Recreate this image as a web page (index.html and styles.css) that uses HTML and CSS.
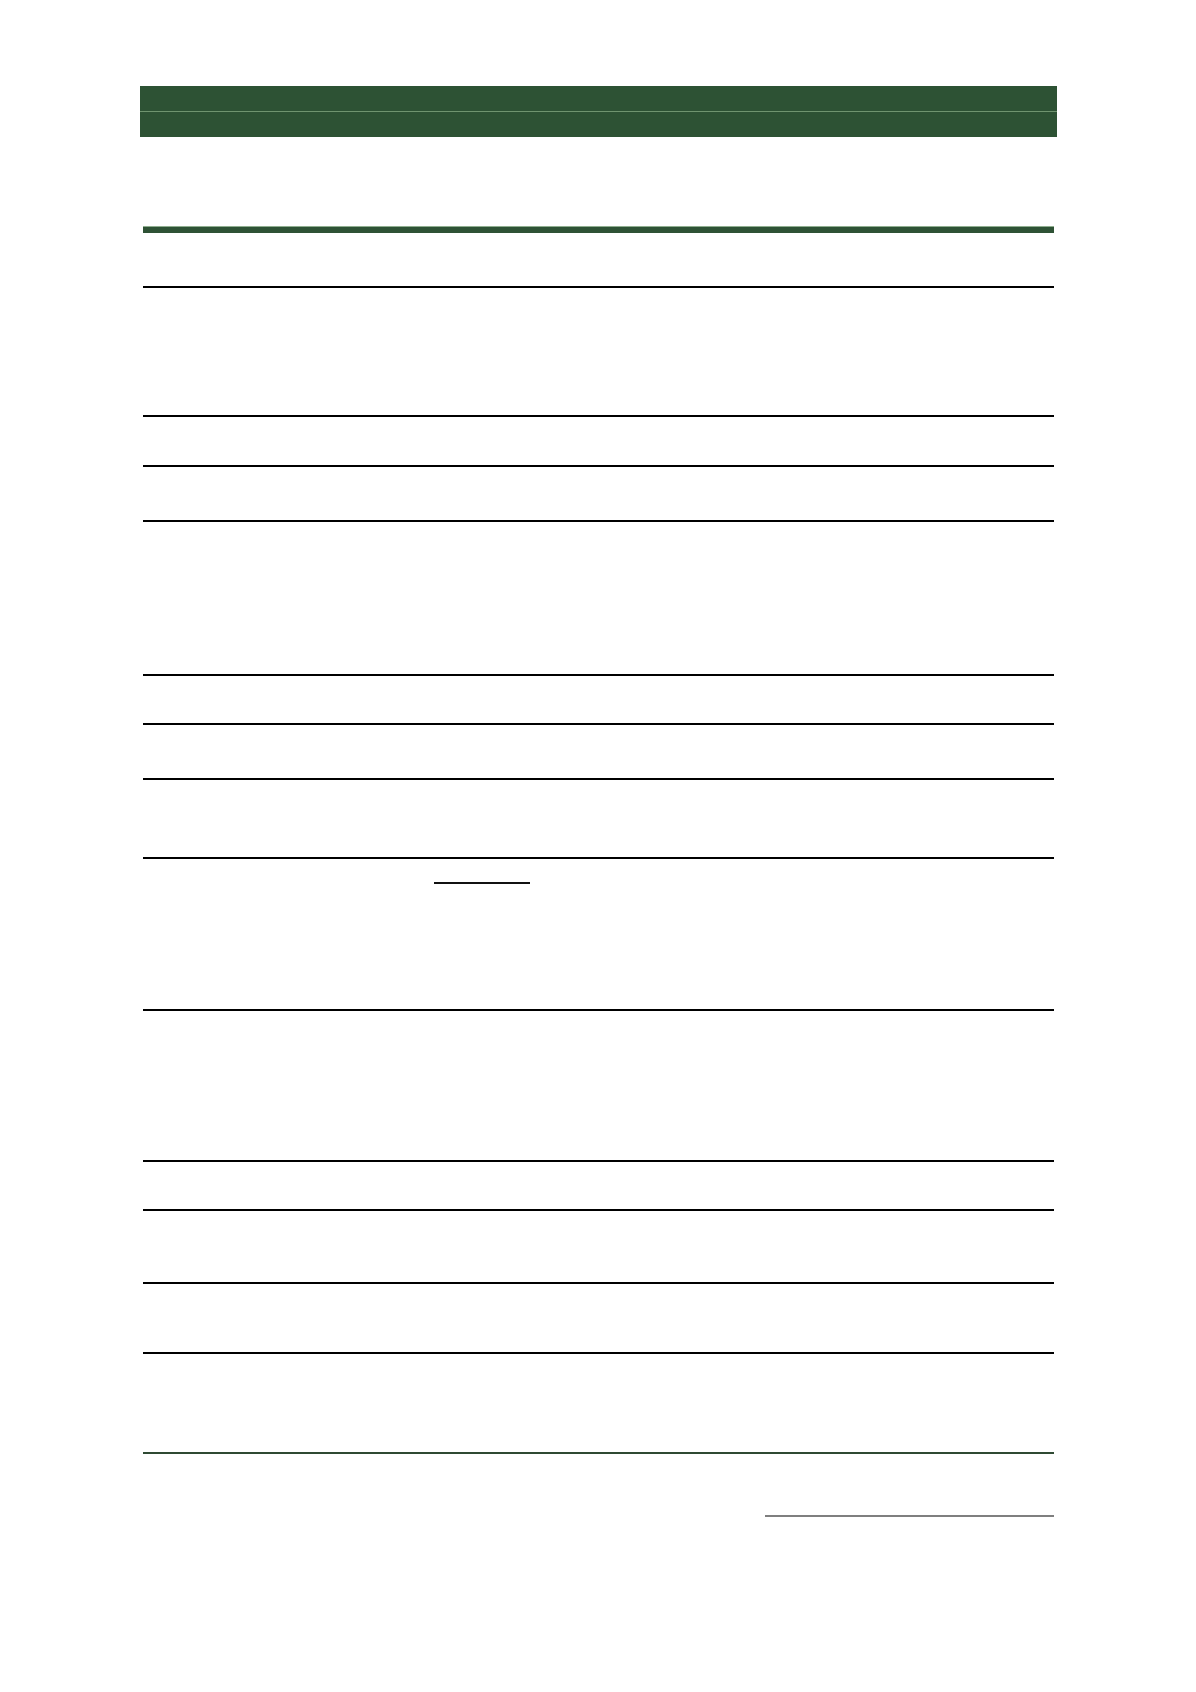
FILE: index.html
```html
<!DOCTYPE html>
<html lang="en">
<head>
<meta charset="utf-8">
<title>Document</title>
<link rel="stylesheet" href="styles.css">
</head>
<body>
<div class="page">
  <div class="banner">
    <div class="banner-half"></div>
    <div class="banner-rule"></div>
    <div class="banner-half"></div>
  </div>

  <div class="sheet">
    <div class="row r53"><div class="cell c1"></div><div class="cell c2"></div><div class="cell c3"></div></div>
    <div class="row r127"><div class="cell c1"></div><div class="cell c2"></div><div class="cell c3"></div></div>
    <div class="row r48"><div class="cell c1"></div><div class="cell c2"></div><div class="cell c3"></div></div>
    <div class="row r53"><div class="cell c1"></div><div class="cell c2"></div><div class="cell c3"></div></div>
    <div class="row r152"><div class="cell c1"></div><div class="cell c2"></div><div class="cell c3"></div></div>
    <div class="row r47"><div class="cell c1"></div><div class="cell c2"></div><div class="cell c3"></div></div>
    <div class="row r53"><div class="cell c1"></div><div class="cell c2"></div><div class="cell c3"></div></div>
    <div class="row r77"><div class="cell c1"></div><div class="cell c2"></div><div class="cell c3"></div></div>
    <div class="row r150"><div class="cell c1"><div class="blank"></div></div><div class="cell c2"></div><div class="cell c3"></div></div>
    <div class="row r149"><div class="cell c1"></div><div class="cell c2"></div><div class="cell c3"></div></div>
    <div class="row r47"><div class="cell c1"></div><div class="cell c2"></div><div class="cell c3"></div></div>
    <div class="row r71"><div class="cell c1"></div><div class="cell c2"></div><div class="cell c3"></div></div>
    <div class="row r68"><div class="cell c1"></div><div class="cell c2"></div><div class="cell c3"></div></div>
    <div class="row r98 last"><div class="cell c1"></div><div class="cell c2"></div><div class="cell c3"></div></div>
  </div>

  <div class="footer">
    <div class="sign-line"></div>
  </div>
</div>
</body>
</html>
```

FILE: styles.css
```css
html, body {
  margin: 0;
  padding: 0;
  background: #ffffff;
  font-family: "Liberation Sans", Arial, sans-serif;
}

.page {
  width: 1196px;
  padding-top: 86px;
  box-sizing: border-box;
}

.banner {
  margin-left: 140px;
  width: 917px;
  display: flex;
  flex-direction: column;
}

.banner-half {
  height: 25px;
  background: #2d5234;
}

.banner-rule {
  height: 1px;
  background: #6f946f;
}

.sheet {
  margin-top: 90px;
  margin-left: 143px;
  width: 911px;
  border-top: 6px solid #2e5235;
  box-shadow: 0 -1px 0 #8fae8f;
}

.row {
  display: grid;
  grid-template-columns: 433px 364px 114px;
}

.cell {
  box-sizing: border-box;
  border-bottom: 2px solid #000000;
}

.row.last .cell {
  border-bottom-color: #2f4a33;
}

.r47 { height: 49px; }
.r48 { height: 50px; }
.r53 { height: 55px; }
.r68 { height: 70px; }
.r71 { height: 73px; }
.r77 { height: 79px; }
.r98 { height: 100px; }
.r127 { height: 129px; }
.r149 { height: 151px; }
.r150 { height: 152px; }
.r152 { height: 154px; }

.c1 {
  display: flex;
  flex-direction: column;
}

.blank {
  margin-top: 23px;
  margin-left: 291px;
  width: 96px;
  height: 0;
  border-top: 2px solid #111111;
}

.footer {
  display: flex;
  justify-content: flex-end;
  width: 1054px;
  margin-top: 61px;
}

.sign-line {
  width: 289px;
  height: 0;
  border-top: 2px solid #7f7f7f;
}
```
